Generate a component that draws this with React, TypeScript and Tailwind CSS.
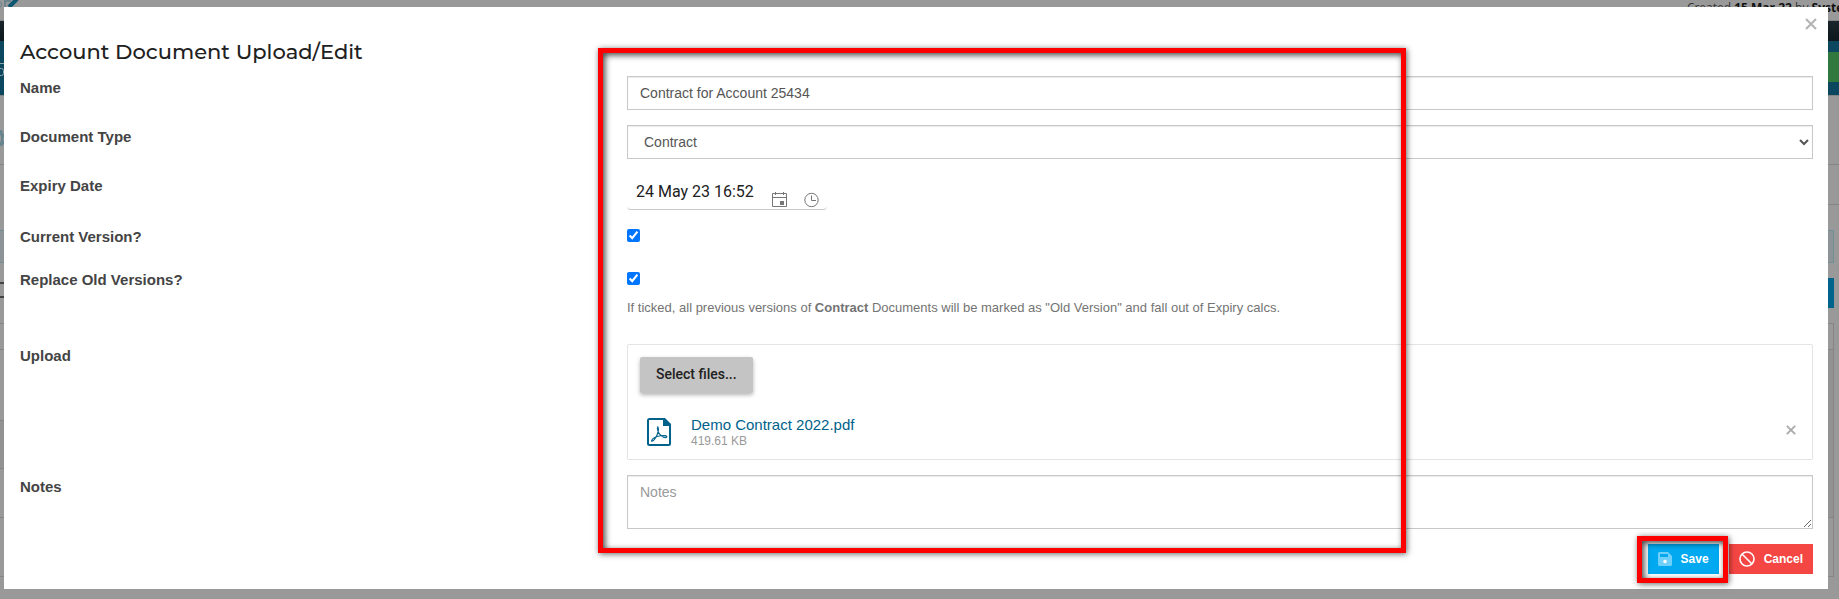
import type { ReactNode } from "react";

const field =
  "block w-full border border-[#c8c8c8] bg-white px-3 text-sm text-[#555] shadow-[inset_0_1px_1px_rgba(0,0,0,0.08)] outline-none";

function Row({ label, htmlFor, children }: { label: string; htmlFor: string; children: ReactNode }) {
  return (
    <div className="grid grid-cols-3">
      <div className="px-4">
        <label htmlFor={htmlFor} className="block text-[15px] leading-6 font-bold text-[#444]">
          {label}
        </label>
      </div>
      <div className="col-span-2 px-[15px]">{children}</div>
    </div>
  );
}

function Highlight({ className }: { className: string }) {
  return (
    <div
      aria-hidden="true"
      className={`pointer-events-none absolute border-[5px] border-[#fe0000] shadow-[1px_1px_6px_rgba(0,0,0,0.6),inset_2px_2px_6px_rgba(0,0,0,0.75)] ${className}`}
    />
  );
}

function Cross({ className }: { className: string }) {
  return (
    <svg viewBox="0 0 12 12" className={className} fill="none" stroke="currentColor" strokeWidth="2.2">
      <path d="M1 1l10 10M11 1L1 11" />
    </svg>
  );
}

function PageBehind() {
  return (
    <div aria-hidden="true" className="absolute inset-0 flex flex-col overflow-hidden bg-[#999]">
      <div className="flex h-[21px] shrink-0 items-start justify-between border-b border-[#858585]">
        <svg width="20" height="12" viewBox="0 0 20 12" fill="none">
          <path d="M0 2c2 0 2 5 0 5" stroke="#5d7f8a" />
          <path d="M5 8V1h6" stroke="#5d7f8a" strokeWidth="1.5" />
          <path d="M9 7L17-1" stroke="#0b5672" strokeWidth="4" />
        </svg>
        <p className="-mr-4 font-['Open_Sans',sans-serif] text-xs leading-4 whitespace-nowrap text-[#333]">
          Created <b className="text-[#111]">15 Mar 22</b> by <b className="text-[#111]">System</b>
        </p>
      </div>
      <div className="h-5 shrink-0 bg-linear-to-b from-[#19242c] to-[#0c181c]" />
      <div className="flex h-[55px] shrink-0 justify-between border-b border-[#858585] bg-[#0b475e]">
        <svg width="4" height="54" viewBox="0 0 4 54" fill="none" stroke="#8fa3ab">
          <path d="M0 22.5h4M0 27.5h1.500q2 0 2 2v3q0 2-2 2H0" />
        </svg>
        <div className="mt-[11px] h-[30px] w-[11px] bg-[#31783f]" />
      </div>
      <div className="flex flex-1 justify-between">
        <div className="flex w-1 flex-col">
          <div className="flex h-[69px] items-center border-b border-[#858585]">
            <svg width="4" height="16" viewBox="0 0 4 16" fill="#68858f" className="mt-4">
              <path d="M0 0h2l1 3 1 1v3l-1 2 1 2v3l-2 2H0v-4l1-1V6L0 5z" />
            </svg>
          </div>
          <div className="h-[65px]" />
          <div className="h-[33px] border-y border-[#719096] bg-[#8d9498]" />
          <div className="h-[21px] border-b-2 border-[#444]" />
          <div className="h-[14px] border-b-2 border-[#444]" />
          <div className="h-[26px] border-b border-[#858585]" />
          <div className="h-[26px] border-b border-[#858585]" />
          <div className="h-[71px] border-b border-[#858585]" />
          <div className="h-12 border-b border-[#858585] bg-[#929292]" />
          <div className="h-[49px] border-b border-[#858585]" />
          <div className="h-[59px] border-b border-[#858585]" />
        </div>
        <div className="flex w-[11px] flex-col">
          <div className="h-[69px] border-b border-[#858585]" />
          <div className="h-10 border-b border-[#858585]" />
          <div className="mt-[25px] mr-[5px] h-[33px] border border-l-0 border-[#719096] bg-[#8d9498]" />
          <div className="mt-[15px] mr-[5px] h-[30px] bg-[#00638c]" />
          <div className="mt-[15px] mr-[5px] h-[27px] border border-l-0 border-[#858585]" />
          <div className="mr-[5px] h-[168px] border-r border-b border-[#858585] bg-[#929292]" />
          <div className="mr-[5px] h-[59px] border-r border-b border-[#858585]" />
        </div>
      </div>
    </div>
  );
}

export default function App() {
  return (
    <div className="relative min-h-screen overflow-hidden pt-[7px] pr-[11px] pb-[10px] pl-1 font-['Liberation_Sans',Arial,sans-serif]">
      <PageBehind />
      <div role="dialog" aria-labelledby="dialog-title" className="relative bg-white pb-[15px]">
        <header className="flex h-[69px] items-start justify-between pr-[11px] pl-4">
          <h1
            id="dialog-title"
            className="pt-[30px] font-[Montserrat,'Noto_Sans',sans-serif] text-[21px] leading-[30px] font-medium text-[#212121]"
          >
            Account Document Upload/Edit
          </h1>
          <button type="button" aria-label="Close" className="pt-[11px] text-[#b5b5b5]">
            <Cross className="size-3" />
          </button>
        </header>

        <form className="flex flex-col gap-[15px]" onSubmit={(e) => e.preventDefault()}>
          <Row label="Name" htmlFor="name">
            <input id="name" type="text" defaultValue="Contract for Account 25434" className={`${field} h-[34px]`} />
          </Row>
          <Row label="Document Type" htmlFor="type">
            <select id="type" className={`${field} h-[34px]`}>
              <option>Contract</option>
            </select>
          </Row>
          <Row label="Expiry Date" htmlFor="expiry">
            <div className="flex h-9 w-[200px] rounded-[4px] border-b border-[#c8c8c8] pl-[9px]">
              <input
                id="expiry"
                type="text"
                defaultValue="24 May 23 16:52"
                className="h-9 w-[136px] pb-[2px] font-[Roboto,sans-serif] text-base text-[#212121] outline-none"
              />
              <button type="button" aria-label="Pick a date" className="mt-[18px] size-4 text-[#777]">
                <svg viewBox="0 0 16 16" className="size-4" fill="none" stroke="currentColor">
                  <path d="M.5 1.500h14v13H.5zM.5 5.500h14M3.500 0v3M11.500 0v3" />
                  <path d="M8 9h4v4H8z" fill="currentColor" stroke="none" />
                </svg>
              </button>
              <button type="button" aria-label="Pick a time" className="mt-[18px] ml-4 size-4 text-[#777]">
                <svg viewBox="0 0 16 16" className="size-4" fill="none" stroke="currentColor">
                  <circle cx="7.500" cy="8" r="6.700" />
                  <path d="M7.500 3.500v5H12" />
                </svg>
              </button>
            </div>
          </Row>
          <Row label="Current Version?" htmlFor="current">
            <div className="h-7 pt-1">
              <input id="current" type="checkbox" defaultChecked className="block size-[13px] accent-[#0075ff]" />
            </div>
          </Row>
          <Row label="Replace Old Versions?" htmlFor="replace">
            <div className="h-[61px] pt-1">
              <input id="replace" type="checkbox" defaultChecked className="block size-[13px] accent-[#0075ff]" />
              <p className="pt-[13px] text-[13px] leading-5 text-[#737373]">
                If ticked, all previous versions of <b>Contract</b> Documents will be marked as "Old Version" and fall
                out of Expiry calcs.
              </p>
            </div>
          </Row>
          <Row label="Upload" htmlFor="select-files">
            <div className="rounded-[2px] border border-[#e4e4e4] px-3 pt-3 pb-[10px]">
              <button
                id="select-files"
                type="button"
                className="block h-9 rounded-[2px] bg-[#c4c4c4] px-4 pb-[2px] font-[Roboto,sans-serif] text-sm font-medium text-[#212121] shadow-[0_2px_4px_rgba(0,0,0,0.3)]"
              >
                Select files...
              </button>
              <div className="mt-5 flex h-9 items-start">
                <svg viewBox="0 0 24 28" className="mt-[5px] ml-[7px] h-7 w-6" fill="none" stroke="#00628b">
                  <path d="M17 1H2.500Q1 1 1 2.500v23Q1 27 2.500 27h19q1.500 0 1.500-1.500V7" strokeWidth="2" />
                  <path d="M16 0h2l6 6v2h-8z" fill="#00628b" stroke="none" />
                  <path
                    d="M4.500 23c1.500 1 4-2.500 5.500-6 1.400-3.200 1.500-7 .8-8.200-1.200 1.700.2 6.200 3.200 8.700 2 1.600 4.800 2.500 5.800 1.500.6-1.500-3-1.700-6.300-1.300-4 .5-8.200 2.500-9 5.300z"
                    strokeWidth="1.100"
                  />
                </svg>
                <div className="ml-5 flex-1">
                  <a href="#file" className="block pt-[2px] text-[15px] leading-5 text-[#00628b]">
                    Demo Contract 2022.pdf
                  </a>
                  <p className="text-xs leading-3 text-[#999]">419.61 KB</p>
                </div>
                <button type="button" aria-label="Remove file" className="mt-3 mr-1 text-[#aaa]">
                  <Cross className="size-[10px]" />
                </button>
              </div>
            </div>
          </Row>
          <Row label="Notes" htmlFor="notes">
            <textarea
              id="notes"
              placeholder="Notes"
              className={`${field} h-[54px] py-[6px] leading-5 placeholder:text-[#999]`}
            />
          </Row>
          <div className="flex justify-end gap-[10px] pr-[15px] text-xs font-bold text-white">
            <div className="relative">
              <button type="submit" className="flex h-[30px] items-center gap-[9px] bg-[#03a9f0] px-[10px]">
                <svg viewBox="0 0 14 14" className="size-[14px]">
                  <path
                    d="M1.500 0H10l4 4v8.500q0 1.500-1.500 1.500h-11Q0 14 0 12.500v-11Q0 0 1.500 0zM2 2v3h8V2zM7 7.500a2 2 0 1 0 0 4 2 2 0 0 0 0-4z"
                    fill="#6fd0fb"
                    fillRule="evenodd"
                  />
                  <circle cx="7" cy="9.500" r="1.900" fill="#fff" />
                </svg>
                Save
              </button>
              <Highlight className="-top-2 -right-[9px] -bottom-[9px] -left-[11px] z-10" />
            </div>
            <button type="button" className="flex h-[30px] items-center gap-[9px] bg-[#f44643] px-[10px]">
              <svg viewBox="0 0 16 16" className="size-4" fill="none" stroke="#fff" strokeWidth="1.600">
                <circle cx="8" cy="8" r="7" />
                <path d="M3 3l10 10" />
              </svg>
              Cancel
            </button>
          </div>
        </form>
        <Highlight className="top-[41px] bottom-9 left-[594px] w-[808px]" />
      </div>
    </div>
  );
}
